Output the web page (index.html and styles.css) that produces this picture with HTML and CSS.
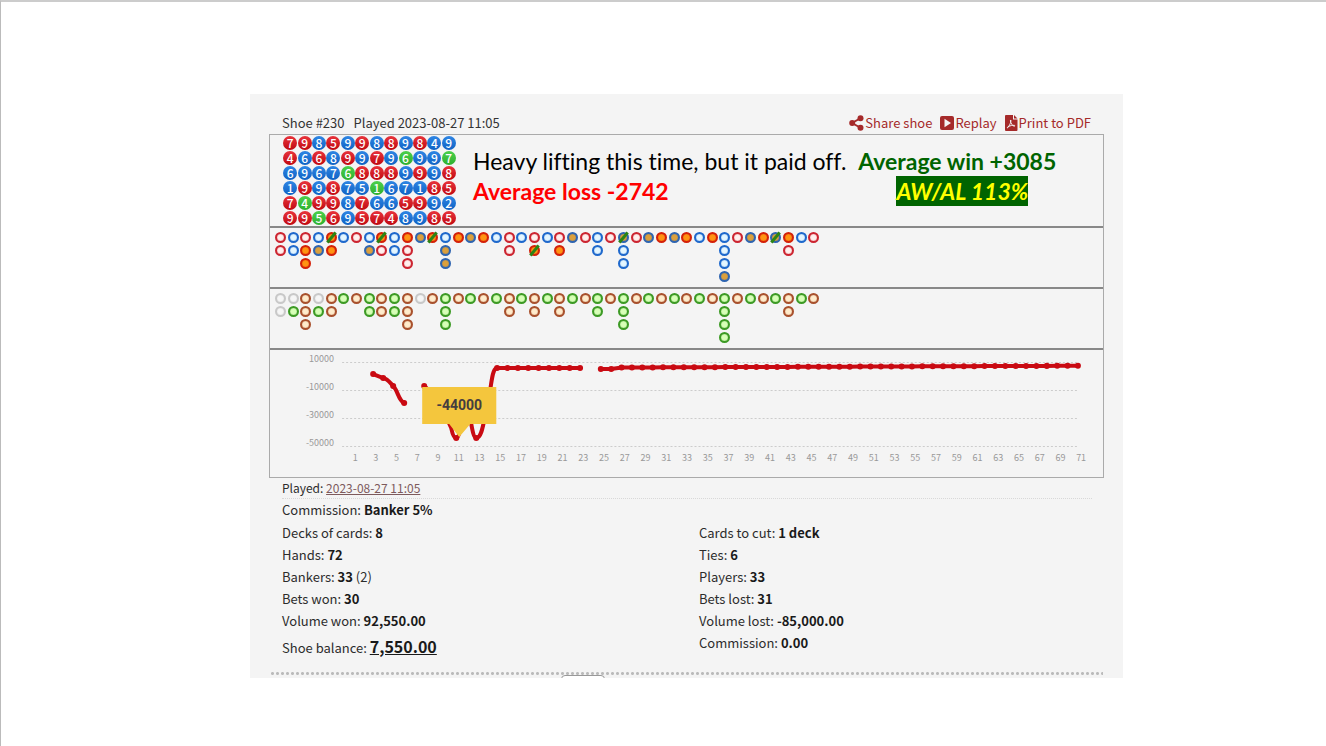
FILE: index.html
```html
<!DOCTYPE html>
<html lang="en">
<head>
  <meta charset="UTF-8" />
  <meta name="viewport" content="width=device-width, initial-scale=1.0"/>
  <title>Shoe #230</title>
  <link rel="stylesheet" href="styles.css">
</head>
<body>
  <main class="panel">
    <header class="shoe-header">
      <div class="shoe-title"><span>Shoe #230</span><span>Played 2023-08-27 11:05</span></div>
      <nav class="actions">
        <a href="#share">
          <svg width="15" height="16" viewBox="0 0 15 16"><path d="M12 3L3 8l9 5" fill="none" stroke="#a52a2a" stroke-width="2"/><circle cx="11.5" cy="3.2" r="3" /><circle cx="3.2" cy="8" r="3"/><circle cx="11.5" cy="12.8" r="3"/></svg>Share shoe</a>
        <a href="#replay">
          <svg width="14" height="16" viewBox="0 0 14 16"><path fill-rule="evenodd" d="M2 1h10q2 0 2 2v10q0 2-2 2H2q-2 0-2-2V3q0-2 2-2zM4.500 3.800v8.400L11 8z"/></svg>Replay</a>
        <a href="#pdf">
          <svg width="13" height="16" viewBox="0 0 13 16"><path d="M1 0h7v4.500h4.500V15q0 1-1 1H1q-1 0-1-1V1q0-1 1-1zM9 0l3.500 3.500H9z"/><path d="M5.500 5c1 0 .3 3.500-2.500 7.500-.8.800-1.200 0 0-.7 2.500-1.300 4.500-1.700 6.500-1.400 1.200.6-.2 1.200-1.500.2C6 9 5 5.800 5.500 5z" fill="none" stroke="#f4f4f4" stroke-width="1"/></svg>Print to PDF</a>
      </nav>
    </header>

    <section class="boards">
      <div class="board board-beads">
        <div class="beads" id="beads"></div>
        <div class="note">
          <p>Heavy lifting this time, but it paid off. <b class="win">Average win +3085</b></p>
          <p class="note-row"><b class="loss">Average loss -2742</b><b class="ratio">AW/AL 113%</b></p>
        </div>
      </div>
      <div class="board board-road"><div class="road" id="bigRoad"></div></div>
      <div class="board board-road"><div class="road" id="eyeRoad"></div></div>
      <div class="board board-chart">
        <svg class="chart" id="chart" viewBox="0 0 832 126">
          <g class="grid">
            <path d="M72 12.500H806M72 40.500H806M72 68.500H806M72 96.500H806"/>
          </g>
          <g class="y-labels">
            <text x="64" y="12">10000</text>
            <text x="64" y="40">-10000</text>
            <text x="64" y="68">-30000</text>
            <text x="64" y="96">-50000</text>
          </g>
          <g class="x-labels" id="xLabels"></g>
          <g class="series" id="series"></g>
          <g class="tip">
            <path d="M152 37h74v37h-26l-11 13-10-13h-27z"/>
            <text x="189" y="60">-44000</text>
          </g>
        </svg>
      </div>
    </section>

    <section class="details">
      <p class="played">Played: <a href="#shoe">2023-08-27 11:05</a></p>
      <p class="commission">Commission: <b>Banker 5%</b></p>
      <div class="stats">
        <ul>
          <li>Decks of cards: <b>8</b></li>
          <li>Hands: <b>72</b></li>
          <li>Bankers: <b>33</b> (2)</li>
          <li>Bets won: <b>30</b></li>
          <li>Volume won: <b>92,550.00</b></li>
          <li class="balance">Shoe balance: <b>7,550.00</b></li>
        </ul>
        <ul>
          <li>Cards to cut: <b>1 deck</b></li>
          <li>Ties: <b>6</b></li>
          <li>Players: <b>33</b></li>
          <li>Bets lost: <b>31</b></li>
          <li>Volume lost: <b>-85,000.00</b></li>
          <li>Commission: <b>0.00</b></li>
        </ul>
      </div>
    </section>
    <div class="dots"><span class="next-tab"></span></div>
  </main>

  <script>
    // bead plate: winning total + R (banker), B (player), G (tie)
    const beads = [
      '7R 9R 8B 5R 9B 9R 8B 8R 9B 8R 4B 9B',
      '4R 6B 6R 8B 9R 9B 7R 9B 6G 9B 9B 7G',
      '6B 9B 6B 7B 6G 8R 8R 8R 9B 9R 9B 8R',
      '1B 9R 9B 8R 7B 5B 1G 6B 7B 1B 8R 5R',
      '7R 4G 9R 9R 8B 7R 6B 6B 5R 9R 9B 2B',
      '9R 9R 5G 6R 9B 5R 7R 4R 8B 9B 8R 5R'
    ];
    document.getElementById('beads').innerHTML = beads.join(' ').split(' ')
      .map(b => `<span class="bead bead-${b[1]}">${b[0]}</span>`).join('');

    // one word per column, top to bottom
    const types = {
      R: 'red', B: 'blue', r: 'red filled', b: 'blue filled',
      x: 'red filled tie', y: 'blue filled tie',
      n: 'grey', o: 'brown', g: 'green'
    };
    function drawRoad(id, data) {
      document.getElementById(id).innerHTML = data.split(' ').map(col =>
        '<div class="road-col">' + [...col].map(c => `<i class="ring ${types[c]}"></i>`).join('') + '</div>'
      ).join('');
    }
    drawRoad('bigRoad', 'RR BB Rrr Bb xr B R Bb xR BB rRR b x Bbb r b r B RR B Rx B Rr b R BB R yBB R b r b r B r BBBb R b r y rR B R');
    drawRoad('eyeRoad', 'nn ng ooo ng oo g o gg oo gg ooo n o ggg o g o g oo g oo g oo g o gg o ggg o g o g o g o gggg o g o g oo g o');

    // chart
    const step = 10.36;
    let labels = '';
    for (let n = 1; n <= 71; n += 2) {
      labels += `<text x="${85 + (n - 1) * step}" y="111">${n}</text>`;
    }
    document.getElementById('xLabels').innerHTML = labels;

    const x = i => 102.5 + i * step;
    const flat = [], late = [];
    for (let i = 12; i <= 20; i++) flat.push([x(i), 18]);
    for (let i = 22; i <= 68; i++) late.push([x(i), i < 24 ? 19 : 17.5 - (i - 24) * 0.04]);
    const dots = [[103, 24], [113, 28], [123, 36], [134, 53], [154, 36], [186, 88], [206, 88], ...flat, ...late];
    document.getElementById('series').innerHTML =
      '<path d="M103 24L113 28C118 29 120 33 123 36C128 41 128 50 134 53"/>' +
      '<path d="M154 36C165 44 176 66 181 78Q183 88 186 88C191 88 191 55 195.500 55C200 55 201 88 206 88C212 88 213 72 217 56C221 40 221 20 226 18"/>' +
      `<polyline points="${flat.join(' ')}"/><polyline points="${late.join(' ')}"/>` +
      dots.map(d => `<circle cx="${d[0]}" cy="${d[1]}" r="3"/>`).join('');
  </script>
</body>
</html>
```
FILE: styles.css
```css
* {
  box-sizing: border-box;
}
html {
  background: #fff;
}
body {
  margin: 0;
  min-height: 100vh;
  border-top: 2px solid #ccc;
  border-left: 1px solid #bbb;
  font-family: "Noto Sans CJK SC", "Noto Sans", sans-serif;
  font-size: 13px;
  line-height: 22px;
  color: #333;
  display: flow-root;
}
p, ul {
  margin: 0;
  padding: 0;
}
li {
  list-style: none;
}
.panel {
  margin: 92px 203px 0 249px;
  padding: 18px 19px 0 19px;
  background: #f4f4f4;
  overflow: hidden;
}
.shoe-header {
  display: flex;
  justify-content: space-between;
  padding: 0 13px;
}
.shoe-title {
  display: flex;
  gap: 9px;
}
.actions {
  display: flex;
  gap: 8px;
}
.actions a {
  display: flex;
  align-items: center;
  gap: 1px;
  color: #a52a2a;
  text-decoration: none;
}
.actions svg {
  fill: #a52a2a;
}

.boards {
  border: 1px solid #aaa;
}
.board {
  border-top: 2px solid #888;
}
.board:first-child {
  border-top: 0;
}
.board-beads {
  display: flex;
  gap: 17px;
  height: 91px;
  padding-left: 13px;
}
.beads {
  display: grid;
  flex: 0 0 173px;
  grid-template-columns: repeat(12, 1fr);
  grid-template-rows: repeat(6, 1fr);
  place-items: center;
}
.bead {
  width: 14px;
  height: 14px;
  border-radius: 50%;
  color: #fff;
  font-size: 12px;
  font-weight: 500;
  line-height: 13px;
  text-align: center;
}
.bead-R {
  background: linear-gradient(#e8343c, #c00810);
}
.bead-B {
  background: linear-gradient(#2f86e4, #0f62c4);
}
.bead-G {
  background: linear-gradient(#4cd04c, #2eb02e);
}
.note {
  padding-top: 11px;
  font-family: Lato, sans-serif;
  font-size: 23px;
  line-height: 30px;
  font-variant-ligatures: none;
  color: #000;
}
.note-row {
  display: flex;
  justify-content: space-between;
  padding-right: 28px;
}
.win {
  margin-left: 6px;
  color: #006400;
}
.loss {
  color: #f00;
}
.ratio {
  background: #006400;
  color: #ff0;
  font-style: italic;
}

.board-road {
  height: 61px;
  padding: 4px 0 0 4px;
}
.road {
  display: flex;
  width: 546px;
}
.road-col {
  display: flex;
  flex: 1;
  flex-direction: column;
  align-items: center;
  gap: 2px;
}
.ring {
  position: relative;
  width: 11px;
  height: 11px;
  border: 2px solid;
  border-radius: 50%;
  box-shadow: inset 0 0 1px 0 currentColor;
}
.red {
  color: #cc2430;
  background: #fff0ee;
}
.blue {
  color: #1e68cc;
  background: #e4f6ff;
}
.red.filled {
  color: #d42008;
  background: #ff9412;
}
.blue.filled {
  color: #2e64b0;
  background: #dca03c;
}
/* green slash over a tie */
.tie::after {
  content: "";
  position: absolute;
  top: 2px;
  left: -3px;
  width: 13px;
  height: 3px;
  background: #2c8414;
  transform: rotate(-50deg);
}
.grey {
  color: #c8c8c8;
  background: #f6f6f6;
}
.brown {
  color: #a8502c;
  background: #ffeccc;
}
.green {
  color: #3c9a24;
  background: #d8ffb8;
}

.board-chart {
  height: 129px;
}
.chart {
  display: block;
  width: 100%;
  font-size: 9px;
}
.grid path {
  stroke: #ccc;
  stroke-dasharray: 2 2;
}
.y-labels text {
  fill: #999;
  text-anchor: end;
}
.x-labels text {
  fill: #999;
  text-anchor: middle;
}
.series path, .series polyline {
  fill: none;
  stroke: #c90a12;
  stroke-width: 4;
}
.series circle {
  fill: #c90a12;
}
.tip path {
  fill: #f4c63d;
}
.tip text {
  fill: #453d3f;
  font-family: Roboto, sans-serif;
  font-size: 14px;
  font-weight: 700;
  text-anchor: middle;
}

.details {
  padding-left: 1px;
  color: #2c2c2c;
}
.details b {
  color: #1a1a1a;
}
.played {
  margin: 0 12px;
  border-bottom: 1px dotted #d8d8d8;
  font-size: 12px;
  line-height: 20px;
}
.played a {
  color: #7d5a5c;
}
.commission {
  padding: 0 12px 1px;
}
.stats {
  display: grid;
  grid-template-columns: 1fr 1fr;
}
.stats li {
  padding-left: 12px;
}
.stats .balance {
  line-height: 28px;
}
.balance b {
  font-size: 16px;
  text-decoration: underline;
}
.dots {
  height: 7px;
  margin: 9px 1px 0;
  background: radial-gradient(circle, #bbb 1px, transparent 2px) 0 0 / 5px 5px repeat-x;
}
.next-tab {
  display: block;
  width: 44px;
  height: 8px;
  margin-left: 291px;
  border: 1px solid #999;
  border-radius: 4px;
  background: #fff;
  transform: translateY(4px);
}
```
